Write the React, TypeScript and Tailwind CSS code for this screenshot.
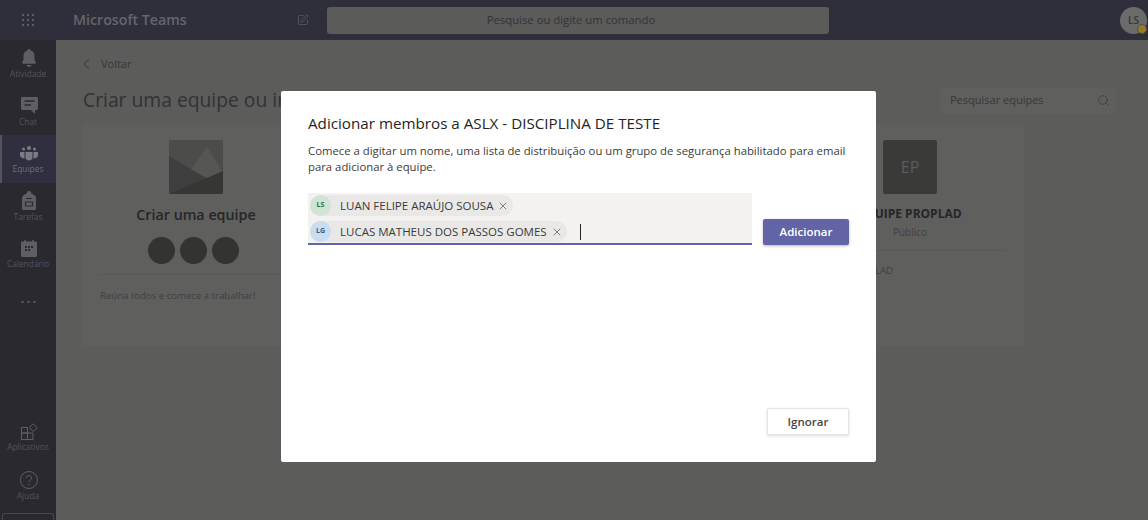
import { Search, SquarePen, X } from "lucide-react";
import type { ReactNode } from "react";

const font = { fontFamily: '"Open Sans", "Noto Sans", sans-serif' };

function BellIcon() {
  return (
    <svg width="18" height="19" viewBox="0 0 18 19" fill="#5f5f63">
      <path d="M9 0c1 0 1.600.7 1.700 1.400C13.300 2.100 14.500 4.200 14.500 7v3.500c0 1.500 1.500 2 1.500 3.300 0 .5-.4.9-1 .9H3c-.6 0-1-.4-1-.9 0-1.300 1.500-1.800 1.500-3.300V7c0-2.800 1.200-4.900 3.800-5.600C7.400.7 8 0 9 0z" />
      <path d="M6.500 16h5c-.3 1.300-1.300 2-2.500 2s-2.200-.7-2.500-2z" />
    </svg>
  );
}

function ChatIcon() {
  return (
    <svg width="17" height="17" viewBox="0 0 17 17">
      <path d="M1.500 0h14c.8 0 1.500.7 1.500 1.500v10c0 .8-.7 1.500-1.500 1.500H14v4l-4-4H1.500C.7 13 0 12.300 0 11.500v-10C0 .7.700 0 1.500 0z" fill="#5f5f63" />
      <path d="M3.500 4h10M3.500 8h6.500" stroke="#2a2a31" strokeWidth="1.500" />
    </svg>
  );
}

function TeamsIcon() {
  return (
    <svg width="18" height="15" viewBox="0 0 18 15" fill="#7b7b84">
      <circle cx="9" cy="2" r="2" />
      <circle cx="3.500" cy="3" r="1.500" />
      <circle cx="14.500" cy="3" r="1.500" />
      <path d="M5.500 6h7v5c0 2-1.500 3.500-3.500 3.500S5.500 13 5.500 11z" />
      <path d="M0 6h4.500v5c0 .6.100 1.200.2 1.500C2 12.500 0 11 0 9zM18 6h-4.500v5c0 .6-.1 1.200-.2 1.500 2.700 0 4.700-1.500 4.700-3.500z" />
    </svg>
  );
}

function TasksIcon() {
  return (
    <svg width="14" height="19" viewBox="0 0 14 19">
      <path d="M4.500 3C4.500 1 5.500 0 7 0s2.500 1 2.500 3c2.800.4 4.500 2 4.500 4.500V17.500c0 .8-.7 1.500-1.500 1.500h-11C.7 19 0 18.300 0 17.500V7.500C0 5 1.700 3.400 4.500 3z" fill="#5f5f63" />
      <path d="M4 7.500h6M3.500 11h7v4h-7z" stroke="#2a2a31" fill="none" strokeWidth="1.200" />
    </svg>
  );
}

function CalendarIcon() {
  return (
    <svg width="16" height="17" viewBox="0 0 16 17">
      <path d="M1.500 1.500h13c.8 0 1.500.7 1.500 1.500v12.500c0 .8-.7 1.500-1.500 1.500h-13C.7 17 0 16.300 0 15.500V3c0-.8.7-1.500 1.500-1.500z" fill="#5f5f63" />
      <path d="M4 0v2M12 0v2" stroke="#5f5f63" strokeWidth="1.500" />
      <path d="M4 6h2v2H4zM7 6h2v2H7zM10 6h2v2h-2zM4 9h2v2H4zM7 9h2v2H7z" fill="#2a2a31" />
    </svg>
  );
}

function AppsIcon() {
  return (
    <svg width="17" height="17" viewBox="0 0 17 17" fill="none" stroke="#5f5f63" strokeWidth="1">
      <path d="M.5 4.500h6v5.500h-6zM.5 10h6v6.500h-6zM6.500 10H12v6.500H6.500zM12.300 .8l3.900 3.900-3.900 3.900-3.900-3.900z" />
    </svg>
  );
}

function HelpIcon() {
  return (
    <svg width="18" height="18" viewBox="0 0 18 18" fill="none" stroke="#5f5f63" strokeWidth="1">
      <circle cx="9" cy="9" r="8.500" />
      <path d="M6.500 7c0-1.500 1.100-2.500 2.500-2.500S11.500 5.500 11.500 7c0 2-2.500 2-2.500 4" />
      <circle cx="9" cy="13.500" r=".4" />
    </svg>
  );
}

function WaffleIcon() {
  const dots = Array.from({ length: 9 });
  return (
    <div className="grid w-[13px] grid-cols-3 gap-[3px]">
      {dots.map((_, i) => (
        <span key={i} className="h-[2px] w-[2px] bg-[#5d5d66]" />
      ))}
    </div>
  );
}

function RailItem({ icon, label, active }: { icon: ReactNode; label: string; active?: boolean }) {
  return (
    <div
      className={`flex h-[47.500px] flex-col items-center justify-center border-l-2 ${
        active ? "border-[#54545c] bg-[#2f2f3f]" : "border-transparent"
      }`}
    >
      <div className="flex h-[20px] items-center">{icon}</div>
      <span className={`-ml-[2px] text-[8.400px] leading-[11px] ${active ? "text-[#6e6e7c]" : "text-[#55555a]"}`}>{label}</span>
    </div>
  );
}

function TeamCard({ children }: { children: ReactNode }) {
  return <div className="flex h-[222px] w-[228px] shrink-0 flex-col items-center bg-[#5f5f5e] px-[18px] pt-[16px]">{children}</div>;
}

function Chip({ initials, name, avatar, text }: { initials: string; name: string; avatar: string; text: string }) {
  return (
    <div className="flex h-[21px] w-fit items-center rounded-full bg-[#e9e8e7] pr-[4px]">
      <span className={`flex h-[21px] w-[21px] items-center justify-center rounded-full text-[7px] font-bold ${avatar} ${text}`}>
        {initials}
      </span>
      <span className="ml-[9px] text-[11.500px] leading-none text-[#3a3a3a]">{name}</span>
      <X className="ml-[4px] h-[12px] w-[12px] text-[#444]" strokeWidth={1.300} />
    </div>
  );
}

export default function App() {
  return (
    <div className="relative flex h-[520px] w-[1148px] flex-col overflow-hidden bg-[#5c5c5b]" style={font}>
      <header className="flex h-[40px] shrink-0 items-center bg-[#2f2f3b]">
        <div className="flex w-[56px] justify-center">
          <WaffleIcon />
        </div>
        <span className="ml-[17px] w-[224px] text-[14.200px] font-semibold text-[#65656c]">Microsoft Teams</span>
        <SquarePen className="h-[12px] w-[12px] text-[#5d5d66]" strokeWidth={1.500} />
        <div className="ml-[18px] flex h-[27px] w-[502px] items-center justify-center rounded-[3px] bg-[#5b5b59] pr-[14px] text-[11.300px] text-[#33333a]">
          Pesquise ou digite um comando
        </div>
        <div className="relative ml-auto mr-[1px] flex h-[27px] w-[27px] items-center justify-center rounded-full bg-[#6b6b69] text-[10px] font-semibold text-[#36363a]">
          LS
          <span className="absolute bottom-0 right-0 h-[10px] w-[10px] rounded-full border border-[#4e4e50] bg-[#9a7a28]" />
        </div>
      </header>
      <div className="flex min-h-0 flex-1">
        <nav className="flex w-[56px] shrink-0 flex-col bg-[#29292f]">
          <div className="flex flex-col">
            <RailItem icon={<BellIcon />} label="Atividade" />
            <RailItem icon={<ChatIcon />} label="Chat" />
            <RailItem icon={<TeamsIcon />} label="Equipes" active />
            <RailItem icon={<TasksIcon />} label="Tarefas" />
            <RailItem icon={<CalendarIcon />} label="Calendário" />
          </div>
          <div className="mt-[23px] flex justify-center gap-[3px]">
            <span className="h-[2px] w-[3px] bg-[#4d4d52]" />
            <span className="h-[2px] w-[3px] bg-[#4d4d52]" />
            <span className="h-[2px] w-[3px] bg-[#4d4d52]" />
          </div>
          <div className="mt-auto flex flex-col gap-[1px]">
            <RailItem icon={<AppsIcon />} label="Aplicativos" />
            <RailItem icon={<HelpIcon />} label="Ajuda" />
            <div className="mx-[2px] mt-[3px] h-[7px] rounded-t-[3px] border border-b-0 border-[#47474c]" />
          </div>
        </nav>
        <main className="min-w-0 flex-1 pl-[27px]">
          <div className="mt-[16px] flex h-[16px] items-center gap-[11px] text-[11px] text-[#38383a]">
            <svg width="7" height="10" viewBox="0 0 7 10" fill="none" stroke="#38383a" strokeWidth="1">
              <path d="M6 .5 1 5l5 4.500" />
            </svg>
            Voltar
          </div>
          <div className="mt-[10px] flex h-[37px] items-center">
            <h1 className="text-[19.300px] font-normal text-[#323234]">Criar uma equipe ou ingressar em uma</h1>
            <div className="ml-auto mr-[32px] flex h-[26px] w-[176px] items-center justify-between bg-[#5f5f5e] pl-[10px] pr-[6px] text-[11px] text-[#38383a]">
              Pesquisar equipes
              <Search className="h-[13px] w-[13px] text-[#38383a]" strokeWidth={1.200} />
            </div>
          </div>
          <div className="mt-[5px] -ml-[1px] flex gap-[10px]">
            <TeamCard>
              <div className="h-[54px] w-[54px] overflow-hidden rounded-[2px]">
                <svg width="54" height="54" viewBox="0 0 54 54">
                  <rect width="54" height="54" fill="#4c4c4b" />
                  <path d="M38 7l16 26-15 6-18-8z" fill="#565655" />
                  <path d="M0 16l39 23-39 15z" fill="#403f3f" />
                  <path d="M54 31v23H0z" fill="#363635" />
                </svg>
              </div>
              <div className="mt-[10px] text-[14.300px] font-semibold text-[#262628]">Criar uma equipe</div>
              <div className="mt-[12px] mr-[6px] flex gap-[5px]">
                <span className="h-[27px] w-[27px] rounded-full bg-[#333332]" />
                <span className="h-[27px] w-[27px] rounded-full bg-[#333332]" />
                <span className="h-[27px] w-[27px] rounded-full bg-[#333332]" />
              </div>
              <div className="mt-[10px] h-px w-full bg-[#585857]" />
              <p className="mt-[14px] w-full text-[9.600px] text-[#3f3f40]">Reúna todos e comece a trabalhar!</p>
            </TeamCard>
            <TeamCard>{null}</TeamCard>
            <TeamCard>{null}</TeamCard>
            <TeamCard>
              <div className="flex h-[54px] w-[54px] items-center justify-center rounded-[2px] bg-[#3a3a39] text-[16px] text-[#5c5c5b]">EP</div>
              <div className="mt-[11px] whitespace-nowrap text-[12px] font-bold text-[#262628]">EQUIPE PROPLAD</div>
              <div className="mt-[2px] text-[10px] text-[#3f3f40]">Público</div>
              <div className="mt-[10px] h-px w-full bg-[#585857]" />
              <p className="mt-[13px] w-full text-[9.600px] text-[#3f3f40]">EQUIPE PROPLAD</p>
            </TeamCard>
          </div>
        </main>
      </div>

      <div className="absolute left-[281px] top-[91px] flex h-[371px] w-[595px] flex-col rounded-[2px] bg-white pb-[27px] pl-[27px] pr-[27px] pt-[21px]">
        <h2 className="text-[15.200px] font-medium leading-[22px] text-[#252423]">Adicionar membros a ASLX - DISCIPLINA DE TESTE</h2>
        <p className="mt-[9px] text-[11.330px] leading-[16px] text-[#3c3b3a]">
          Comece a digitar um nome, uma lista de distribuição ou um grupo de segurança habilitado para email para adicionar à equipe.
        </p>
        <div className="mt-[18px] flex items-end gap-[11px]">
          <div className="flex h-[52px] w-[444px] flex-col gap-[5px] border-b-2 border-[#6264a7] bg-[#f3f2f1] pl-[2px] pt-[2px]">
            <Chip initials="LS" name="LUAN FELIPE ARAÚJO SOUSA" avatar="bg-[#cfe3d6]" text="text-[#2f6b48]" />
            <div className="flex items-center">
              <Chip initials="LG" name="LUCAS MATHEUS DOS PASSOS GOMES" avatar="bg-[#cadcf0]" text="text-[#35608f]" />
              <span className="ml-[13px] h-[16px] w-px bg-[#252423]" />
            </div>
          </div>
          <button type="button" className="flex h-[26px] w-[86px] items-center justify-center rounded-[2px] bg-[#6264a7] text-[11.500px] font-semibold text-white shadow-[0_1px_3px_rgba(0,0,0,0.3)]">
            Adicionar
          </button>
        </div>
        <div className="mt-auto flex justify-end">
          <button type="button" className="flex h-[27px] w-[82px] items-center justify-center rounded-[2px] border border-[#e6e5e4] bg-white text-[11.500px] font-semibold text-[#484644] shadow-[0_1px_3px_rgba(0,0,0,0.15)]">
            Ignorar
          </button>
        </div>
      </div>
    </div>
  );
}
